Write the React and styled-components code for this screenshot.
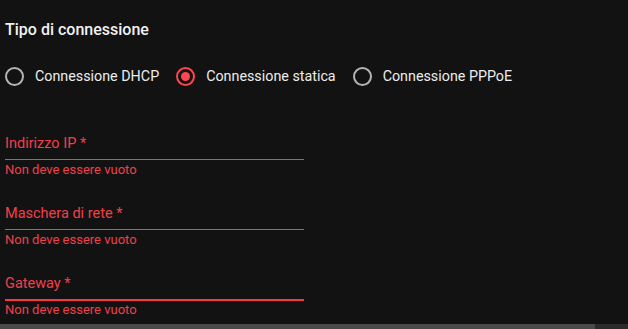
import React from 'react'
import { styled, createGlobalStyle } from 'styled-components'

const GlobalStyle = createGlobalStyle`
    html, body {
        margin: 0;
        padding: 0;
        background: #131212;
        overflow: hidden;
    }
    body {
        font-family: Roboto, "Liberation Sans", sans-serif;
    }
`

const Page = styled.div`
    width: 628px;
    height: 329px;
    display: flex;
    flex-direction: column;
    background: #131212;
    overflow: hidden;
`

const Content = styled.div`
    flex: 1;
    padding: 19px 0 0 5px;
    box-sizing: border-box;
`

const Title = styled.h3`
    margin: 0;
    font-size: 16px;
    font-weight: 500;
    line-height: 22px;
    color: #f1f1f1;
`

const RadioGroup = styled.div`
    display: flex;
    align-items: center;
    margin-top: 25px;
`

const RadioItem = styled.label`
    display: flex;
    align-items: center;
    gap: 11px;
    margin-right: 17px;
    font-size: 14.3px;
    color: #ececec;
    line-height: 20px;
`

const RadioCircle = styled.span`
    width: 19px;
    height: 19px;
    box-sizing: border-box;
    border-radius: 50%;
    border: 2px solid ${props => props.$checked ? '#ff4550' : '#b4b4b4'};
    display: flex;
    align-items: center;
    justify-content: center;

    &::after {
        content: '';
        width: 9px;
        height: 9px;
        border-radius: 50%;
        background: #ff4550;
        display: ${props => props.$checked ? 'block' : 'none'};
    }
`

const Fields = styled.div`
    display: flex;
    flex-direction: column;
    gap: 26px;
    margin-top: 48px;
`

const Field = styled.div`
    width: 299px;
    display: flex;
    flex-direction: column;
`

const FieldLabel = styled.label`
    font-size: 14.5px;
    line-height: 20px;
    color: #f0404c;
    padding-bottom: 5px;
    border-bottom: ${props => props.$focused ? '2px solid #ff3442' : '1px solid #ec4551'};
`

const Helper = styled.span`
    font-size: 13px;
    line-height: 16px;
    margin-top: ${props => props.$focused ? '1px' : '2px'};
    color: #f0404c;
`

const Scrollbar = styled.div`
    height: 5px;
    display: flex;
    background: #2b2b2b;
`

const Thumb = styled.div`
    width: 595px;
    background: #4a4a4a;
`

const options = [
    { id: 'dhcp', label: 'Connessione DHCP' },
    { id: 'static', label: 'Connessione statica', checked: true },
    { id: 'pppoe', label: 'Connessione PPPoE' },
]

const campi = [
    { id: 'ip', label: 'Indirizzo IP *' },
    { id: 'mask', label: 'Maschera di rete *' },
    { id: 'gw', label: 'Gateway *', focused: true },
]

export default function App() {
    return (
        <Page>
            <GlobalStyle />
            <Content>
                <Title>Tipo di connessione</Title>
                <RadioGroup>
                    {options.map(opt => (
                        <RadioItem key={opt.id}>
                            <RadioCircle $checked={opt.checked} />
                            {opt.label}
                        </RadioItem>
                    ))}
                </RadioGroup>
                <Fields>
                    {campi.map(c => (
                        <Field key={c.id}>
                            <FieldLabel $focused={c.focused}>{c.label}</FieldLabel>
                            <Helper $focused={c.focused}>Non deve essere vuoto</Helper>
                        </Field>
                    ))}
                </Fields>
            </Content>
            <Scrollbar>
                <Thumb />
            </Scrollbar>
        </Page>
    )
}
